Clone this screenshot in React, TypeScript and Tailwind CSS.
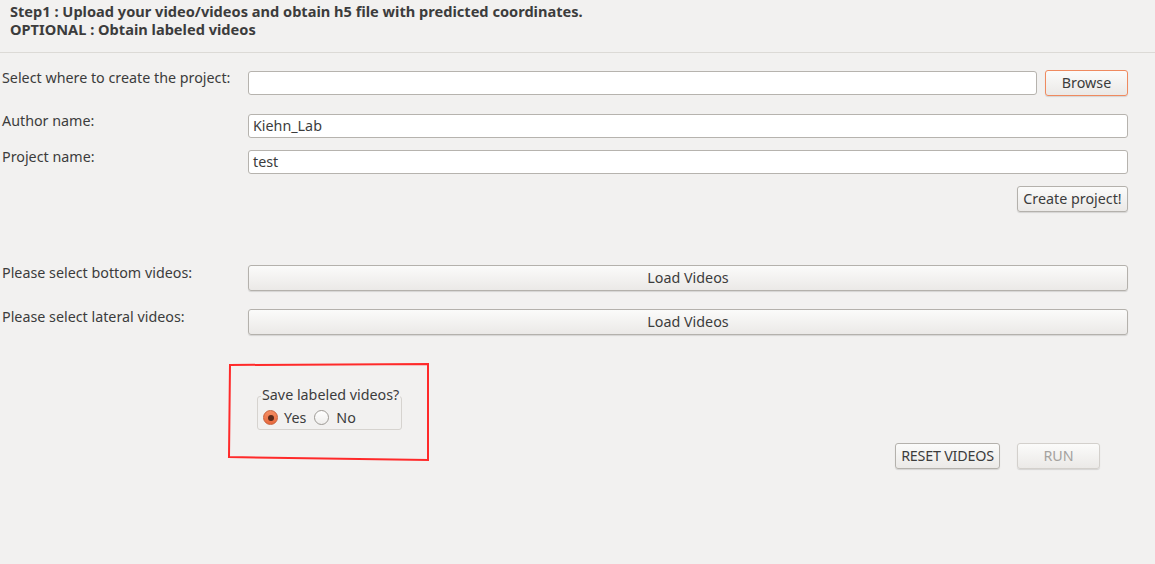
import type { ReactNode } from 'react'

const font = { fontFamily: '"Noto Sans", "Open Sans", sans-serif' }

function Btn({ children, className = '', disabled = false }: { children: ReactNode; className?: string; disabled?: boolean }) {
  return (
    <button
      className={
        'flex h-[26px] items-center justify-center rounded-[3px] border bg-gradient-to-b from-[#fbfbfa] to-[#ebe9e7] shadow-[0_1px_1px_rgba(0,0,0,0.12)] ' +
        (disabled ? 'border-[#d3d0cc] text-[#a5a29e] ' : 'border-[#b4b1ac] text-[#3c3c3c] ') +
        className
      }
    >
      {children}
    </button>
  )
}

function Field({ value = '', className = '' }: { value?: string; className?: string }) {
  return (
    <div className={'flex h-[24px] items-center rounded-[3px] border border-[#b6b3ae] bg-white px-[4px] text-[#3c3c3c] ' + className}>
      {value}
    </div>
  )
}

function Radio({ checked }: { checked?: boolean }) {
  return checked ? (
    <span className="flex h-[15px] w-[15px] shrink-0 items-center justify-center rounded-full border border-[#c8613b] bg-gradient-to-b from-[#f58d62] to-[#e8693d]">
      <span className="block h-[6px] w-[6px] rounded-full bg-[#5a2a1a]" />
    </span>
  ) : (
    <span className="block h-[15px] w-[15px] shrink-0 rounded-full border border-[#9d9a95] bg-gradient-to-b from-white to-[#efeeec]" />
  )
}

export default function App() {
  return (
    <div className="relative h-[564px] w-[1155px] overflow-hidden bg-[#f2f1f0] text-[14.3px] text-[#3c3c3c]" style={font}>
      <header className="h-[53px] border-b border-[#dcdad6] pl-[10px] pt-[2px] text-[14.6px] font-bold leading-[18px] text-[#3c3c3c]">
        <div>Step1 : Upload your video/videos and obtain h5 file with predicted coordinates.</div>
        <div>OPTIONAL : Obtain labeled videos</div>
      </header>

      <div className="pl-[2px] pr-[27px]">
        <div className="mt-[17px] flex h-[26px] items-center">
          <span className="w-[246px] -translate-y-[5px]">Select where to create the project:</span>
          <Field className="flex-1" />
          <Btn className="ml-[8px] w-[83px] border-[#ef8a5f]">Browse</Btn>
        </div>

        <div className="mt-[18px] flex h-[24px] items-center">
          <span className="w-[246px] -translate-y-[5px]">Author name:</span>
          <Field className="flex-1" value="Kiehn_Lab" />
        </div>

        <div className="mt-[12px] flex h-[24px] items-center">
          <span className="w-[246px] -translate-y-[5px]">Project name:</span>
          <Field className="flex-1" value="test" />
        </div>

        <div className="mt-[12px] flex justify-end">
          <Btn className="w-[111px]">Create project!</Btn>
        </div>

        <div className="mt-[53px] flex h-[26px] items-center">
          <span className="w-[246px] -translate-y-[5px]">Please select bottom videos:</span>
          <Btn className="flex-1">Load Videos</Btn>
        </div>

        <div className="mt-[18px] flex h-[26px] items-center">
          <span className="w-[246px] -translate-y-[5px]">Please select lateral videos:</span>
          <Btn className="flex-1">Load Videos</Btn>
        </div>

        <div className="ml-[255px] mt-[61px] flex">
          <div className="relative h-[34px] w-[145px] rounded-[3px] border border-[#d6d3cf]">
            <span className="absolute -top-[10px] left-[3px] bg-[#f2f1f0] px-[1px] leading-[16px]">Save labeled videos?</span>
            <div className="mt-[10px] flex items-center pl-[5px]">
              <Radio checked />
              <span className="ml-[6px]">Yes</span>
              <span className="ml-[8px]">
                <Radio />
              </span>
              <span className="ml-[7px]">No</span>
            </div>
          </div>
        </div>

        <div className="mt-[13px] flex justify-end pr-[28px]">
          <Btn className="w-[105px] tracking-[-0.2px]">RESET VIDEOS</Btn>
          <Btn className="ml-[17px] w-[83px]" disabled>
            RUN
          </Btn>
        </div>
      </div>

      <svg className="pointer-events-none absolute left-0 top-0" width="1155" height="564">
        <polygon points="230,365 428,364 428,460 229,457" fill="none" stroke="#ff2a2a" strokeWidth="2" />
      </svg>
    </div>
  )
}
